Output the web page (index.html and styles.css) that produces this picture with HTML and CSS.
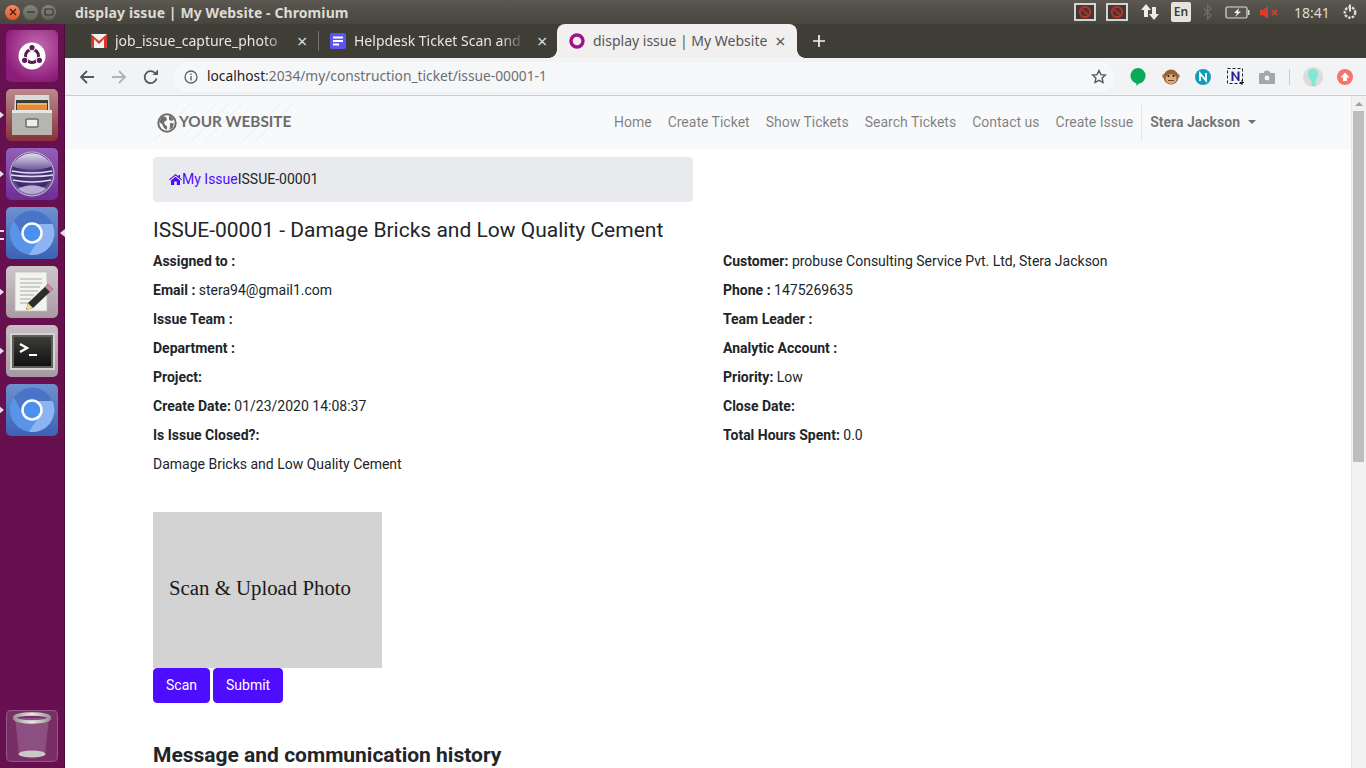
FILE: index.html
```html
<!DOCTYPE html>
<html lang="en">
<head>
    <meta charset="UTF-8">
    <title>display issue | My Website</title>
    <link rel="stylesheet" href="styles.css">
</head>
<body>
    <header class="panel">
        <div class="win-btns">
            <span class="win-btn close">
                <svg width="8" height="8" viewBox="0 0 8 8"><path d="M1 1l6 6M7 1l-6 6" stroke="#4a1a0a" stroke-width="1.3"/></svg>
            </span>
            <span class="win-btn">
                <svg width="8" height="8" viewBox="0 0 8 8"><path d="M0 4h8" stroke="#35342e" stroke-width="1.3"/></svg>
            </span>
            <span class="win-btn">
                <svg width="10" height="8" viewBox="0 0 10 8"><rect x="1" y="1" width="8" height="6" rx="1" fill="none" stroke="#35342e" stroke-width="1.2"/></svg>
            </span>
        </div>
        <div class="panel-title">display issue | My Website - Chromium</div>
        <div class="indicators">
            <span class="blocked"><svg width="14" height="14" viewBox="0 0 14 14"><circle cx="7" cy="7" r="5.2" fill="none" stroke="#b8302c" stroke-width="2.2"/><path d="M3.4 3.4l7.2 7.2" stroke="#b8302c" stroke-width="2"/></svg></span>
            <span class="blocked second"><svg width="14" height="14" viewBox="0 0 14 14"><circle cx="7" cy="7" r="5.2" fill="none" stroke="#b8302c" stroke-width="2.2"/><path d="M3.4 3.4l7.2 7.2" stroke="#b8302c" stroke-width="2"/></svg></span>
            <svg class="ind-net" width="20" height="18" viewBox="0 0 20 18"><path d="M6 1L1 7h3v7h4V7h3zM14 17l5-6h-3V4h-4v7H9z" fill="#ecebe6"/></svg>
            <span class="lang">En</span>
            <svg class="ind-bt" width="10" height="16" viewBox="0 0 10 16"><path d="M1 4.5l7 7-3.5 3.5V1L8 4.5l-7 7" fill="none" stroke="#6d6c66" stroke-width="1.3"/></svg>
            <svg class="ind-batt" width="25" height="13" viewBox="0 0 25 13"><rect x="1" y="1" width="21" height="11" rx="1.5" fill="#55544e" stroke="#dcdbd6" stroke-width="1.2"/><rect x="23" y="4" width="1.5" height="5" fill="#dcdbd6"/><path d="M14 2L9 7h3l-2 4 6-5.5h-3z" fill="#f2f1ec"/></svg>
            <svg class="ind-vol" width="19" height="13" viewBox="0 0 19 13"><path d="M0 4h3l5-4v13L3 9H0z" fill="#df3b2d"/><path d="M12 4l5 5M17 4l-5 5" stroke="#df3b2d" stroke-width="1.8"/></svg>
            <span class="clock">18:41</span>
            <svg width="16" height="16" viewBox="0 0 16 16"><circle cx="8" cy="8.5" r="5.2" fill="none" stroke="#dfded9" stroke-width="2.4" stroke-dasharray="2.5 1.2"/><path d="M8 .5v7" stroke="#dfded9" stroke-width="2"/></svg>
        </div>
    </header>

    <div class="desktop">
        <aside class="launcher">
            <div class="launch-item">
                <div class="launch-icon ic-ubuntu">
                    <svg width="28" height="28" viewBox="0 0 28 28"><circle cx="14" cy="14" r="13.5" fill="#fff"/><circle cx="14" cy="14" r="6.5" fill="none" stroke="#5c1a56" stroke-width="3"/><circle cx="14" cy="5.5" r="3.6" fill="#fff"/><circle cx="6.6" cy="18.3" r="3.6" fill="#fff"/><circle cx="21.4" cy="18.3" r="3.6" fill="#fff"/><circle cx="14" cy="5.5" r="2.6" fill="#5c1a56"/><circle cx="6.6" cy="18.3" r="2.6" fill="#5c1a56"/><circle cx="21.4" cy="18.3" r="2.6" fill="#5c1a56"/></svg>
                </div>
            </div>
            <div class="launch-item running">
                <div class="launch-icon ic-files">
                    <svg width="42" height="44" viewBox="0 0 42 44"><path d="M4 2h34l1 19H3z" fill="#d9d9d6"/><rect x="5" y="7" width="32" height="11" fill="#3a3a38"/><rect x="6" y="10" width="30" height="2" fill="#f2b45c"/><rect x="6" y="12" width="30" height="6" fill="#e8883a"/><path d="M1 17h40v25H1z" fill="#b5b5b1"/><rect x="1" y="17" width="40" height="3" fill="#e6e6e3"/><rect x="15" y="26" width="12" height="8" rx="1" fill="#ecece9" stroke="#6d6d6a" stroke-width="1.5"/></svg>
                </div>
            </div>
            <div class="launch-item running">
                <div class="launch-icon ic-eclipse">
                    <svg width="46" height="46" viewBox="0 0 46 46">
                        <defs>
                            <radialGradient id="sphere" cx="50%" cy="45%" r="55%">
                                <stop offset="0" stop-color="#5a4488"/>
                                <stop offset=".75" stop-color="#3a2768"/>
                                <stop offset="1" stop-color="#8e80ad"/>
                            </radialGradient>
                            <linearGradient id="sphere-top" x1="0" y1="0" x2="0" y2="1">
                                <stop offset="0" stop-color="#e6e0f0"/>
                                <stop offset="1" stop-color="#6d5a98"/>
                            </linearGradient>
                        </defs>
                        <circle cx="23" cy="23" r="22" fill="url(#sphere)" stroke="#c9bedc"/>
                        <path d="M3 15a22 22 0 0 1 40 0c-10 5-30 5-40 0z" fill="url(#sphere-top)"/>
                        <path d="M3 20q20 4 40 0M2 24q21 3 42 0M4 29q19 4 38 0" fill="none" stroke="#e2daf0" stroke-width="1.7"/>
                        <path d="M9 38a22 22 0 0 0 28 0c-8-5-20-5-28 0z" fill="#b8abd2"/>
                    </svg>
                </div>
            </div>
            <div class="launch-item running-multi active">
                <div class="launch-icon ic-chromium">
                    <svg width="46" height="46" viewBox="0 0 46 46"><use href="#chromium"/></svg>
                </div>
            </div>
            <div class="launch-item running">
                <div class="launch-icon ic-editor">
                    <svg width="44" height="44" viewBox="0 0 44 44"><rect x="5" y="2" width="32" height="39" fill="#f3f3f0" stroke="#bbb" stroke-width=".8"/><path d="M10 9h22M10 13h22M10 17h20M10 21h18M10 25h14M10 29h11M10 33h10" stroke="#a9a9a6"/><path d="M38 14l5 5-20 19-7 2 2-7z" fill="#2d2d2b"/><path d="M38 14l5 5-3 3-5-5z" fill="#d47db2"/><path d="M18 33l5 5-7 2z" fill="#f0d98a"/></svg>
                </div>
            </div>
            <div class="launch-item running">
                <div class="launch-icon ic-term">
                    <div class="term-screen">
                        <svg width="26" height="22" viewBox="0 0 26 22"><path d="M1 3l7 4-7 4" fill="none" stroke="#fff" stroke-width="2.4"/><path d="M10 14h8" stroke="#fff" stroke-width="2"/></svg>
                    </div>
                </div>
            </div>
            <div class="launch-item running">
                <div class="launch-icon ic-chromium">
                    <svg width="46" height="46" viewBox="0 0 46 46"><use href="#chromium"/></svg>
                </div>
            </div>
            <div class="launch-spacer"></div>
            <div class="launch-item">
                <div class="launch-icon ic-trash">
                    <svg width="38" height="48" viewBox="0 0 38 48">
                        <defs>
                            <linearGradient id="rim" x1="0" y1="0" x2="1" y2="0">
                                <stop offset="0" stop-color="#9a9a97"/>
                                <stop offset=".5" stop-color="#e8e8e5"/>
                                <stop offset="1" stop-color="#9a9a97"/>
                            </linearGradient>
                        </defs>
                        <path d="M2 6l4 36h26l4-36z" fill="#a26f9d" fill-opacity=".5"/>
                        <ellipse cx="19" cy="6" rx="17.5" ry="4" fill="none" stroke="url(#rim)" stroke-width="3.4"/>
                        <ellipse cx="19" cy="42" rx="13.5" ry="3.5" fill="#c9c9c5"/>
                    </svg>
                </div>
            </div>
        </aside>

        <div class="browser">
            <div class="tabstrip">
                <div class="tab">
                    <svg class="favicon" width="16" height="14" viewBox="0 0 16 14"><path d="M0 0h16v14H0z" fill="#f3f1ee"/><path d="M0 0l8 7 8-7v14h-3V5l-5 5-5-5v9H0z" fill="#d2382c"/></svg>
                    <span class="tab-label">job_issue_capture_photo</span>
                    <span class="tab-x">×</span>
                </div>
                <span class="tab-sep"></span>
                <div class="tab tab-second">
                    <svg class="favicon" width="16" height="16" viewBox="0 0 16 16"><rect width="16" height="16" rx="2" fill="#5d55f2"/><path d="M3 4.5h10M3 8h10M3 11.5h6" stroke="#fff" stroke-width="1.8"/></svg>
                    <span class="tab-label">Helpdesk Ticket Scan and</span>
                    <span class="tab-x">×</span>
                </div>
                <div class="tab tab-active">
                    <svg class="favicon" width="16" height="16" viewBox="0 0 16 16"><circle cx="8" cy="8" r="6" fill="none" stroke="#a0118f" stroke-width="3.4"/></svg>
                    <span class="tab-label">display issue | My Website</span>
                    <span class="tab-x">×</span>
                </div>
                <svg class="new-tab" width="14" height="14" viewBox="0 0 14 14"><path d="M7 1v12M1 7h12" stroke="#f2f1ee" stroke-width="1.7"/></svg>
            </div>

            <div class="toolbar">
                <svg width="16" height="16" viewBox="0 0 16 16"><path d="M15 8H2M8 2L2 8l6 6" fill="none" stroke="#55575a" stroke-width="1.8"/></svg>
                <svg width="16" height="16" viewBox="0 0 16 16"><path d="M1 8h13M8 2l6 6-6 6" fill="none" stroke="#b0b2b5" stroke-width="1.8"/></svg>
                <svg width="16" height="16" viewBox="0 0 16 16"><path d="M13.5 9.5A6 6 0 1 1 12 4" fill="none" stroke="#55575a" stroke-width="1.8"/><path d="M9.5 6H15V.5z" fill="#55575a"/></svg>
                <div class="omnibox">
                    <svg width="14" height="14" viewBox="0 0 14 14"><circle cx="7" cy="7" r="6" fill="none" stroke="#5f6164" stroke-width="1.3"/><path d="M7 6v4.5M7 3.5V5" stroke="#5f6164" stroke-width="1.4"/></svg>
                    <span class="url"><span class="host">localhost</span>:2034/my/construction_ticket/issue-00001-1</span>
                    <svg width="16" height="15" viewBox="0 0 16 15"><path d="M8 1.5l1.900 4.100 4.500.5-3.300 3 .9 4.400L8 11.300l-4 2.200.9-4.400-3.300-3 4.500-.5z" fill="none" stroke="#55575a" stroke-width="1.4"/></svg>
                </div>
                <div class="extensions">
                    <svg width="16" height="18" viewBox="0 0 16 18"><path d="M8 0a7.800 7.800 0 0 1 1 15.500L6.500 18v-2.600A7.800 7.800 0 0 1 8 0z" fill="#0da95a"/></svg>
                    <svg width="18" height="16" viewBox="0 0 18 16"><circle cx="2.5" cy="7" r="2.3" fill="#b5804f"/><circle cx="15.5" cy="7" r="2.3" fill="#b5804f"/><circle cx="9" cy="8" r="7.5" fill="#96623a"/><ellipse cx="9" cy="10" rx="5.5" ry="4.8" fill="#dcae7c"/><circle cx="6.5" cy="7" r="1.1" fill="#2c1c10"/><circle cx="11.5" cy="7" r="1.1" fill="#2c1c10"/><path d="M6 11.5h6" stroke="#6b4325"/></svg>
                    <svg width="16" height="16" viewBox="0 0 16 16"><circle cx="8" cy="8" r="8" fill="#0f9dbb"/><path d="M5 12V4.500l6 7V4" fill="none" stroke="#fff" stroke-width="1.8"/></svg>
                    <svg width="17" height="17" viewBox="0 0 17 17"><rect x=".5" y=".5" width="15" height="15" fill="none" stroke="#222" stroke-dasharray="3 2"/><path d="M4.500 13V3.500H6L10.500 10V3.500h2V13H11L6.500 6.500V13z" fill="#2a1d90"/><path d="M15 12v5M12.500 14.500h5" stroke="#222"/></svg>
                    <svg width="16" height="14" viewBox="0 0 16 14"><path d="M1 3h3.500L6 .8h4L11.500 3H15a1 1 0 0 1 1 1v9a1 1 0 0 1-1 1H1a1 1 0 0 1-1-1V4a1 1 0 0 1 1-1z" fill="#a5a6a7"/><circle cx="8" cy="8" r="3" fill="#f2f3f5" stroke="#a5a6a7"/></svg>
                    <span class="ext-sep"></span>
                    <span class="avatar"><svg width="12" height="18" viewBox="0 0 12 18"><path d="M1 5a5 5 0 0 1 10 0c0 4-2 5-2.500 7v5h-4v-5C4 10 1 9 1 5z" fill="#7fe8d6"/></svg></span>
                    <svg width="16" height="16" viewBox="0 0 16 16"><circle cx="8" cy="8" r="8" fill="#f5756b"/><path d="M8 3.500l4.500 5H10V12H6V8.500H3.500z" fill="#fff"/></svg>
                </div>
            </div>

            <div class="viewport">
                <div class="page">
                    <nav class="site-nav">
                        <div class="site-nav-inner">
                            <a class="brand" href="#">
                                <svg width="20" height="20" viewBox="0 0 20 20"><circle cx="10" cy="10" r="8.7" fill="none" stroke="#6f6f6f" stroke-width="2"/><path d="M5 3l4 1 1 3-3 2 1 3 2 1v4l-3-2-2-4-3-2zM12 2l5 4-2 2-3-1zM13 10l4 .5-1.500 4.500-3 2 .5-4z" fill="#6f6f6f"/></svg>
                                <span class="brand-name">YOUR WEBSITE</span>
                            </a>
                            <ul class="nav-links">
                                <li><a href="#">Home</a></li>
                                <li><a href="#">Create Ticket</a></li>
                                <li><a href="#">Show Tickets</a></li>
                                <li><a href="#">Search Tickets</a></li>
                                <li><a href="#">Contact us</a></li>
                                <li><a href="#">Create Issue</a></li>
                                <li class="nav-user"><a href="#"><b>Stera Jackson</b><span class="caret"></span></a></li>
                            </ul>
                        </div>
                    </nav>

                    <main class="content">
                        <div class="breadcrumb">
                            <a href="#"><svg width="13" height="11" viewBox="0 0 13 11"><path d="M6.500 0L0 5.500l.7.800 5.800-4.800 5.800 4.800.7-.8-2-1.700V1H9.500v1.500zM2 6.500V11h3.200V7.500h2.600V11H11V6.500L6.500 2.700z" fill="#4f0dff"/></svg>My Issue</a>ISSUE-00001
                        </div>
                        <h3 class="issue-title">ISSUE-00001 - Damage Bricks and Low Quality Cement</h3>
                        <div class="fields">
                            <p><b>Assigned to :</b></p>
                            <p><b>Customer:</b> probuse Consulting Service Pvt. Ltd, Stera Jackson</p>
                            <p><b>Email :</b> stera94@gmail1.com</p>
                            <p><b>Phone :</b> 1475269635</p>
                            <p><b>Issue Team :</b></p>
                            <p><b>Team Leader :</b></p>
                            <p><b>Department :</b></p>
                            <p><b>Analytic Account :</b></p>
                            <p><b>Project:</b></p>
                            <p><b>Priority:</b> Low</p>
                            <p><b>Create Date:</b> 01/23/2020 14:08:37</p>
                            <p><b>Close Date:</b></p>
                            <p><b>Is Issue Closed?:</b></p>
                            <p><b>Total Hours Spent:</b> 0.0</p>
                            <p>Damage Bricks and Low Quality Cement</p>
                        </div>
                        <div class="scan-box">Scan &amp; Upload Photo</div>
                        <div class="scan-actions">
                            <button class="btn">Scan</button>
                            <button class="btn">Submit</button>
                        </div>
                        <h4 class="history">Message and communication history</h4>
                    </main>
                </div>
                <div class="scrollbar"><div class="scroll-thumb"></div></div>
            </div>
        </div>
    </div>

    <svg class="defs" width="0" height="0">
        <defs>
            <g id="chromium">
                <circle cx="23" cy="23" r="22" fill="#5a94e8"/>
                <path d="M28 14h15.500A22 22 0 0 1 20 44.800L31 28z" fill="#8db4f2"/>
                <path d="M5 10.500A22 22 0 0 1 43.500 14H23l-9 13z" fill="#4a74c8"/>
                <circle cx="23" cy="23" r="9.5" fill="#4a90f0" stroke="#fff" stroke-width="2.5"/>
            </g>
        </defs>
    </svg>
</body>
</html>
```
FILE: styles.css
```css
* {
    margin: 0;
    padding: 0;
    box-sizing: border-box;
}

html, body {
    width: 1366px;
    height: 768px;
    overflow: hidden;
}

body {
    font-family: 'Roboto', sans-serif;
    font-size: 14px;
    line-height: 21px;
    color: #212529;
    background-color: #fff;
}

.defs {
    display: block;
    height: 0;
}

/* ubuntu top panel */
.panel {
    display: flex;
    align-items: center;
    height: 24px;
    background: linear-gradient(#5a5850, #46453e);
    color: #dfdbd2;
}

.win-btns {
    display: flex;
    gap: 3px;
    padding-left: 5px;
    width: 75px;
}

.win-btn {
    display: flex;
    align-items: center;
    justify-content: center;
    width: 15px;
    height: 15px;
    border-radius: 50%;
    background: linear-gradient(#85847c, #65645c);
}

.win-btn.close {
    background: linear-gradient(#f58b5e, #e0562a);
}

.panel-title {
    flex: 1;
    font-family: 'Noto Sans', 'Open Sans', sans-serif;
    font-weight: 700;
    font-size: 14px;
    letter-spacing: 0.1px;
}

.indicators {
    display: flex;
    align-items: center;
    height: 24px;
    padding-right: 8px;
}

.blocked {
    display: flex;
    align-items: center;
    justify-content: center;
    width: 22px;
    height: 18px;
    margin-right: 10px;
    background: #3a3a36;
    border: 2px solid #d4d4d0;
}

.blocked.second {
    margin-right: 12px;
}

.ind-net {
    margin-right: 11px;
}

.lang {
    width: 20px;
    height: 20px;
    margin-right: 12px;
    border-radius: 2px;
    background: #e5e3dc;
    color: #3c3b35;
    font-family: 'Noto Sans', sans-serif;
    font-weight: 600;
    font-size: 12px;
    line-height: 20px;
    text-align: center;
}

.ind-bt {
    margin-right: 12px;
}

.ind-batt {
    margin-right: 10px;
}

.ind-vol {
    margin-right: 15px;
}

.clock {
    width: 36px;
    margin-right: 12px;
    font-family: 'Noto Sans', sans-serif;
    font-size: 14px;
    color: #dfdbd2;
}

.desktop {
    display: flex;
    height: 744px;
}

/* launcher */
.launcher {
    display: flex;
    flex-direction: column;
    align-items: center;
    width: 65px;
    padding: 6px 0;
    gap: 7px;
    background-color: #661050;
    border-right: 1px solid #4e0c3e;
}

.launch-item {
    position: relative;
    width: 52px;
    height: 52px;
}

.launch-spacer {
    flex: 1;
}

.launch-item.running::before {
    content: "";
    position: absolute;
    left: -7px;
    top: 22px;
    border-left: 5px solid #e4dfe2;
    border-top: 4px solid transparent;
    border-bottom: 4px solid transparent;
}

.launch-item.running-multi::before {
    content: "";
    position: absolute;
    left: -7px;
    top: 23px;
    width: 5px;
    height: 6px;
    border-top: 2px solid #e4dfe2;
    border-bottom: 2px solid #e4dfe2;
}

.launch-item.active::after {
    content: "";
    position: absolute;
    right: -7px;
    top: 22px;
    border-right: 5px solid #e4dfe2;
    border-top: 4px solid transparent;
    border-bottom: 4px solid transparent;
}

.launch-icon {
    display: flex;
    align-items: center;
    justify-content: center;
    width: 52px;
    height: 52px;
    border-radius: 5px;
    overflow: hidden;
}

.ic-ubuntu {
    background: radial-gradient(circle at 60% 35%, #c56fb0, #8c1c7a 75%);
}

.ic-files {
    background: linear-gradient(#b98a8c, #88323a);
}

.ic-eclipse {
    background: linear-gradient(#9360b8, #6d2d95);
}

.ic-chromium {
    background: linear-gradient(#6f90cf, #3d62b4);
}

.ic-editor {
    background: linear-gradient(#cfc6ca, #a99aa2);
}

.ic-term {
    background: linear-gradient(#c9bfc3, #a69aa0);
}

.term-screen {
    width: 41px;
    height: 33px;
    padding: 4px 0 0 5px;
    background: linear-gradient(#3c3c3a, #111);
    border: 2px solid #5e5e5c;
    outline: 2px solid #d4d4d2;
}

.ic-trash {
    background: rgba(255, 255, 255, 0.13);
    border: 1px solid rgba(255, 255, 255, 0.2);
}

/* chromium window */
.browser {
    display: flex;
    flex-direction: column;
    flex: 1;
    min-width: 0;
}

.tabstrip {
    display: flex;
    align-items: center;
    height: 34px;
    padding-left: 26px;
    background-color: #3e3d36;
    color: #e8e6e1;
    font-family: 'Noto Sans', sans-serif;
    font-size: 14px;
}

.tab {
    display: flex;
    align-items: center;
    flex: none;
    width: 227px;
    height: 34px;
}

.favicon {
    flex: none;
    margin-right: 8px;
}

.tab-label {
    width: 176px;
    padding-bottom: 2px;
    overflow: hidden;
    white-space: nowrap;
    -webkit-mask-image: linear-gradient(to right, #000 85%, transparent);
    mask-image: linear-gradient(to right, #000 85%, transparent);
}

.tab-x {
    margin-left: 6px;
    font-size: 18px;
    color: #dcdad5;
}

.tab-sep {
    flex: none;
    width: 1px;
    height: 20px;
    margin-right: 11px;
    background-color: #77766f;
}

.tab-second .tab-label {
    width: 172px;
}

.tab-second .tab-x {
    margin-left: 11px;
}

.tab-active {
    position: relative;
    width: 240px;
    padding-left: 12px;
    border-radius: 8px 8px 0 0;
    background-color: #f2f0ee;
    color: #55565a;
}

/* concave corners at the foot of the active tab */
.tab-active::before,
.tab-active::after {
    content: "";
    position: absolute;
    bottom: 0;
    width: 8px;
    height: 8px;
}

.tab-active::before {
    left: -8px;
    background: radial-gradient(circle at 0 0, transparent 7.5px, #f2f0ee 8px);
}

.tab-active::after {
    right: -8px;
    background: radial-gradient(circle at 100% 0, transparent 7.5px, #f2f0ee 8px);
}

.tab-active .tab-label {
    width: auto;
    -webkit-mask-image: none;
    mask-image: none;
}

.tab-active .tab-x {
    margin-left: 8px;
    color: #55565a;
}

.new-tab {
    flex: none;
    margin-left: 15px;
}

.toolbar {
    display: flex;
    align-items: center;
    height: 38px;
    padding-left: 14px;
    gap: 16px;
    background-color: #f2f3f5;
    border-bottom: 1px solid #ccc;
}

.toolbar > svg {
    flex: none;
}

.omnibox {
    display: flex;
    align-items: center;
    flex: none;
    width: 942px;
    height: 30px;
    margin-left: -2px;
    padding: 0 8px 0 11px;
    gap: 9px;
    border-radius: 15px;
    background-color: #f6f7f8;
    font-family: 'Noto Sans', sans-serif;
    font-size: 13.75px;
}

.url {
    flex: 1;
    padding-bottom: 2px;
    color: #6c6e72;
}

.host {
    color: #202124;
}

.extensions {
    display: flex;
    align-items: center;
    flex: none;
    gap: 15.5px;
    margin-left: -1px;
}

.ext-sep {
    width: 1px;
    height: 16px;
    margin: 0 -2px;
    background-color: #ccc;
}

.avatar {
    display: flex;
    align-items: flex-end;
    justify-content: center;
    width: 20px;
    height: 20px;
    margin-right: -2px;
    border-radius: 50%;
    overflow: hidden;
    background-color: #dcdcdc;
}

/* page area */
.viewport {
    display: flex;
    flex: 1;
    min-height: 0;
}

.page {
    flex: 1;
    min-width: 0;
    overflow: hidden;
}

.scrollbar {
    width: 15px;
    background-color: #f1f1f1;
    border-left: 1px solid #e7e7e7;
}

.scrollbar::before {
    content: "";
    display: block;
    width: 0;
    height: 0;
    margin: 6px auto 5px;
    border-left: 4px solid transparent;
    border-right: 4px solid transparent;
    border-bottom: 4px solid #a0a0a0;
}

.scroll-thumb {
    height: 351px;
    margin: 0 2px 0 1px;
    background-color: #bdbdbd;
}

.site-nav {
    height: 53px;
    background-color: #f8f9fa;
}

.site-nav-inner {
    display: flex;
    align-items: center;
    justify-content: space-between;
    width: 1126px;
    height: 53px;
    margin-left: 73px;
    padding-left: 15px;
}

.brand {
    display: flex;
    align-items: center;
    flex: none;
    gap: 2px;
    width: 140px;
    height: 37px;
    padding-left: 4px;
    background: repeating-linear-gradient(135deg, transparent 0 8px, #f1f2f3 8px 9px);
    color: #6c6c6c;
    font-family: 'Lato', sans-serif;
    font-weight: 700;
    font-size: 15.3px;
    white-space: nowrap;
    text-decoration: none;
}

.brand-name {
    padding-bottom: 2px;
}

.nav-links {
    display: flex;
    align-items: center;
    list-style: none;
}

.nav-links a {
    display: block;
    padding: 8px;
    color: rgba(0, 0, 0, 0.5);
    text-decoration: none;
}

.nav-user {
    border-left: 1px solid #e4e5e6;
}

.nav-links .nav-user a {
    color: rgba(0, 0, 0, 0.55);
}

.caret {
    display: inline-block;
    margin-left: 8px;
    vertical-align: 3px;
    border-top: 4px solid;
    border-left: 4px solid transparent;
    border-right: 4px solid transparent;
}

.content {
    width: 1140px;
    margin-left: 73px;
    padding: 8px 15px 0;
}

.breadcrumb {
    display: flex;
    align-items: center;
    width: 540px;
    height: 45px;
    margin-bottom: 16px;
    padding-left: 16px;
    border-radius: 4px;
    background-color: #e9eaed;
}

.breadcrumb a {
    display: flex;
    align-items: center;
    color: #4f0dff;
    text-decoration: none;
}

.issue-title {
    margin-bottom: 8px;
    font-weight: 400;
    font-size: 21px;
    line-height: 25px;
}

.fields {
    display: grid;
    grid-template-columns: 570px 1fr;
    grid-auto-rows: 29px;
}

.fields b {
    font-weight: 700;
}

.scan-box {
    display: flex;
    align-items: center;
    width: 229px;
    height: 156px;
    margin-top: 29px;
    padding: 0 0 6px 16px;
    background-color: #d3d3d3;
    color: #1a1a1a;
    font-family: 'Liberation Serif', serif;
    font-size: 20.8px;
}

.scan-actions {
    display: flex;
    gap: 3px;
}

.btn {
    height: 35px;
    padding: 0 12px 2px;
    border: 1px solid #4f0dff;
    border-radius: 4px;
    background-color: #4f0dff;
    color: #fff;
    font-family: 'Roboto', sans-serif;
    font-size: 14px;
}

.history {
    margin-top: 39px;
    font-weight: 700;
    font-size: 21px;
    line-height: 26px;
}
```
